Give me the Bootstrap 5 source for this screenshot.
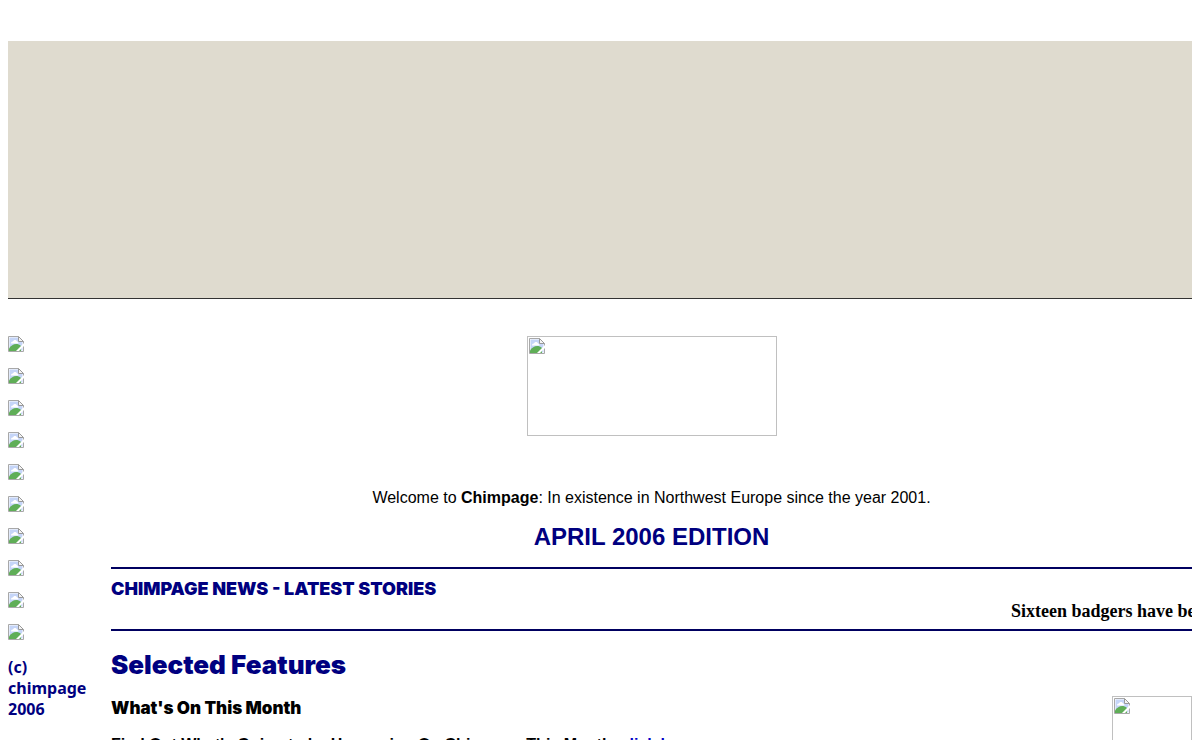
<!DOCTYPE html>
<html lang="en">
<head>
<meta charset="utf-8">
<meta name="viewport" content="width=device-width, initial-scale=1">
<title>Chimpage</title>
<link rel="stylesheet" href="https://cdn.jsdelivr.net/npm/bootstrap@5.3.0/dist/css/bootstrap.min.css">
<style>
body { font: 16px/18px "Liberation Sans", Arial, sans-serif; color: #000; background: #fff; }
.banner { height: 258px; margin: 41px 0 37px; background: #dfdbcf; border-bottom: 1px solid #333; }
.side-nav { width: 103px; }
.side-nav a, .side-nav svg, .picture svg { display: block; }
.copyright { font: 700 16px/21px "Noto Sans", sans-serif; color: #000080; width: 80px; margin: 17px 0 0; }
.picture { border: 1px solid #c0c0c0; padding: 1px; }
.picture-logo { width: 250px; height: 100px; }
.picture-feature { width: 80px; height: 80px; }
.welcome { margin-top: 53px; }
.edition { font-size: 24px; line-height: 28px; font-weight: 700; color: #000080; }
.news { border-top: 2px solid #000060; border-bottom: 2px solid #000060; height: 64px; }
.heavy { font-family: Inter, sans-serif; font-weight: 900; }
.news-title { font-size: 18px; line-height: 24px; color: #000080; }
.ticker { font: 700 18px/20px "Liberation Serif", "Times New Roman", serif; }
.ticker span { width: 181px; }
.features-title { font-size: 26px; line-height: 36px; margin-bottom: 13px; color: #000080; }
.feature-title { font-size: 17px; line-height: 24px; margin-bottom: 16px; }
.feature a { color: #0000c8; text-decoration: none; }
</style>
</head>
<body class="vh-100 overflow-hidden px-2">
<svg class="d-none" aria-hidden="true">
  <symbol id="missing" viewBox="0 0 16 16">
    <path d="M.5 .5h10l5 5v10H.5z" fill="#fff"/>
    <path d="M1.500 1.500h9v4h4v9h-13z" fill="#c5d5f8"/>
    <path d="M3 7.500C3 5.500 4.500 5.500 5 5.500 5.500 3.500 8.500 3.500 9 5.500c1.500 0 1.500 2 1.500 2z" fill="#fff"/>
    <path d="M1 15v-2.500C4 8 9 6.500 13 10v5z" fill="#5fae57"/>
    <path d="M.5 15.500V.5h10M.5 15.500H15.500V5.500" fill="none" stroke="#a8a8a8"/>
    <path d="M10.500 .5v5h5z" fill="#f4f4f4" stroke="#999"/>
    <path d="M16 7v3L11 15H8z" fill="#fff"/>
  </symbol>
</svg>
<header class="banner"></header>
<div class="d-flex">
  <nav class="side-nav flex-shrink-0" aria-label="Main">
    <div class="d-flex flex-column align-items-start gap-3">
      <a href="#" aria-label="Section 1"><svg width="16" height="16"><use href="#missing"/></svg></a>
      <a href="#" aria-label="Section 2"><svg width="16" height="16"><use href="#missing"/></svg></a>
      <a href="#" aria-label="Section 3"><svg width="16" height="16"><use href="#missing"/></svg></a>
      <a href="#" aria-label="Section 4"><svg width="16" height="16"><use href="#missing"/></svg></a>
      <a href="#" aria-label="Section 5"><svg width="16" height="16"><use href="#missing"/></svg></a>
      <a href="#" aria-label="Section 6"><svg width="16" height="16"><use href="#missing"/></svg></a>
      <a href="#" aria-label="Section 7"><svg width="16" height="16"><use href="#missing"/></svg></a>
      <a href="#" aria-label="Section 8"><svg width="16" height="16"><use href="#missing"/></svg></a>
      <a href="#" aria-label="Section 9"><svg width="16" height="16"><use href="#missing"/></svg></a>
      <a href="#" aria-label="Section 10"><svg width="16" height="16"><use href="#missing"/></svg></a>
    </div>
    <p class="copyright">(c) chimpage 2006</p>
  </nav>
  <main class="flex-grow-1">
    <div class="picture picture-logo mx-auto"><svg width="16" height="16"><use href="#missing"/></svg></div>
    <p class="welcome text-center mb-3">Welcome to <b>Chimpage</b>: In existence in Northwest Europe since the year 2001.</p>
    <h1 class="edition text-center mb-3">APRIL 2006 EDITION</h1>
    <section class="news pt-2">
      <h2 class="news-title heavy m-0">CHIMPAGE NEWS - LATEST STORIES</h2>
      <div class="ticker d-flex justify-content-end"><span class="text-nowrap overflow-hidden">Sixteen badgers have been</span></div>
    </section>
    <section class="pt-3">
      <h2 class="features-title heavy">Selected Features</h2>
      <div class="feature d-flex justify-content-between">
        <div>
          <h3 class="feature-title heavy">What's On This Month</h3>
          <p class="fw-bold">Find Out What's Going to be Happening On Chimpage This Month, <a href="#">click here</a></p>
        </div>
        <div class="picture picture-feature"><svg width="16" height="16"><use href="#missing"/></svg></div>
      </div>
    </section>
  </main>
</div>
<script src="https://cdn.jsdelivr.net/npm/bootstrap@5.3.0/dist/js/bootstrap.bundle.min.js"></script>
</body>
</html>
